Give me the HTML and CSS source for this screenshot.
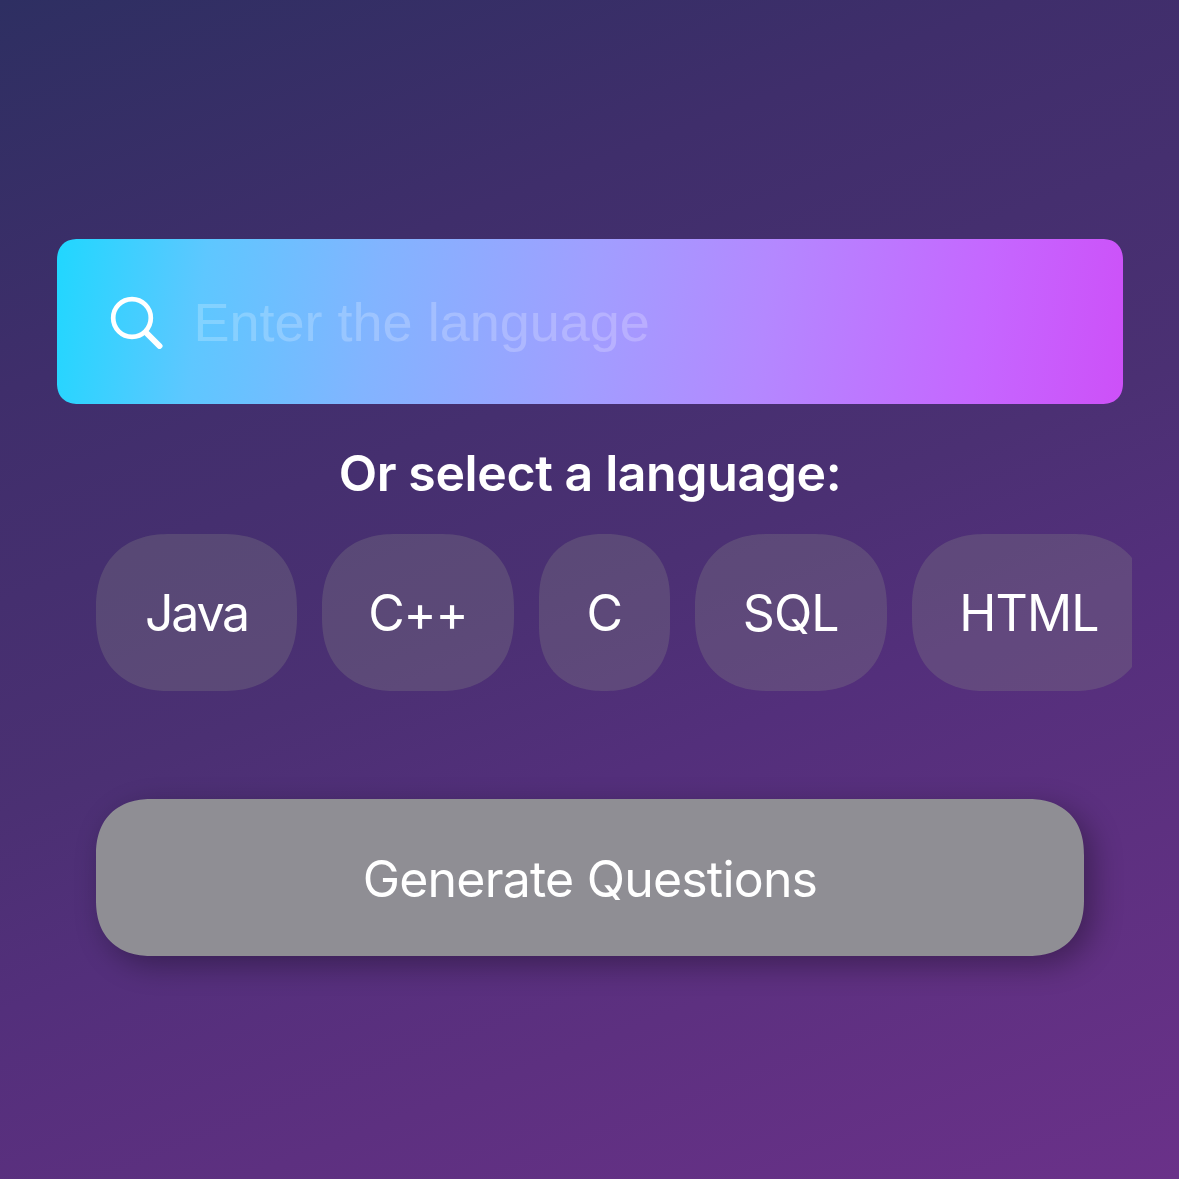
FILE: index.html
```html
<!DOCTYPE html>
<html lang="en">
<head>
<meta charset="utf-8">
<title>Question Generator</title>
<link rel="stylesheet" href="styles.css">
</head>
<body>
<main class="screen">
  <label class="search">
    <svg class="search-icon" viewBox="0 0 54 54" fill="none" stroke="#fff" aria-hidden="true">
      <circle cx="22" cy="23" r="18.800" stroke-width="4.700"/>
      <path d="M36 37.500L49.500 51" stroke-width="6" stroke-linecap="round"/>
    </svg>
    <span class="placeholder">Enter the language</span>
  </label>
  <h1 class="heading">Or select a language:</h1>
  <div class="chips">
    <button class="chip java"><span>Java</span></button>
    <button class="chip cpp"><span>C++</span></button>
    <button class="chip c"><span>C</span></button>
    <button class="chip sql"><span>SQL</span></button>
    <button class="chip html"><span>HTML</span></button>
  </div>
  <button class="generate"><span>Generate Questions</span></button>
</main>
</body>
</html>
```
FILE: styles.css
```css
* {
  box-sizing: border-box;
}

body {
  margin: 0;
  font-family: Inter, "Liberation Sans", sans-serif;
  color: #fff;
}

.screen {
  display: flex;
  flex-direction: column;
  width: 1179px;
  height: 1179px;
  padding-top: 239px;
  overflow: hidden;
  background: linear-gradient(159deg, #2e2f62 0%, #3f2e6b 24%, #4b3073 50%, #532f7b 62%, #5d3080 78%, #6a3189 100%);
}

.search {
  display: flex;
  align-items: center;
  width: 1066px;
  height: 165px;
  margin-left: 57px;
  padding-left: 53px;
  border-radius: 21px;
  corner-shape: superellipse(1.2);
  background: linear-gradient(98deg, #20d7ff 0%, #5ec7ff 14%, #82b4ff 30%, #a19eff 50%, #b488ff 66%, #c567ff 86%, #cd50f8 100%);
}

.search-icon {
  width: 54px;
  height: 54px;
}

.placeholder {
  margin-left: 29.500px;
  font: 54px/62px "Liberation Sans", sans-serif;
  color: rgba(255, 255, 255, 0.22);
}

.heading {
  height: 60px;
  margin: 39px 0 0;
  font-size: 50px;
  font-weight: 600;
  line-height: 60px;
  letter-spacing: -0.400px;
  text-indent: 1px;
  text-align: center;
}

.chips {
  display: flex;
  gap: 24.500px;
  width: 1132px;
  height: 158px;
  margin-top: 30.500px;
  padding-left: 96px;
  overflow: hidden;
}

.chip,
.generate {
  display: flex;
  flex: none;
  align-items: center;
  justify-content: center;
  padding: 2px 0 0;
  border: 0;
  font: 400 50px/60px Inter, sans-serif;
  letter-spacing: -0.800px;
  color: #fff;
}

.chip {
  height: 157px;
  border-radius: 74px;
  corner-shape: superellipse(1.2);
  background: rgba(134, 134, 134, 0.3);
}

.java {
  width: 201px;
  letter-spacing: -2.200px;
}

.cpp {
  width: 192.500px;
  letter-spacing: -1.200px;
}

.c {
  width: 131.500px;
  border-radius: 65px;
}

.sql { width: 192.500px; }

.html { width: 235px; }

.generate {
  width: 988px;
  height: 157px;
  margin: 107.500px 0 0 96px;
  border-radius: 56px;
  corner-shape: superellipse(1.2);
  background: #8f8e94;
  box-shadow: 9px 9px 30px rgba(0, 0, 0, 0.33);
}
```
